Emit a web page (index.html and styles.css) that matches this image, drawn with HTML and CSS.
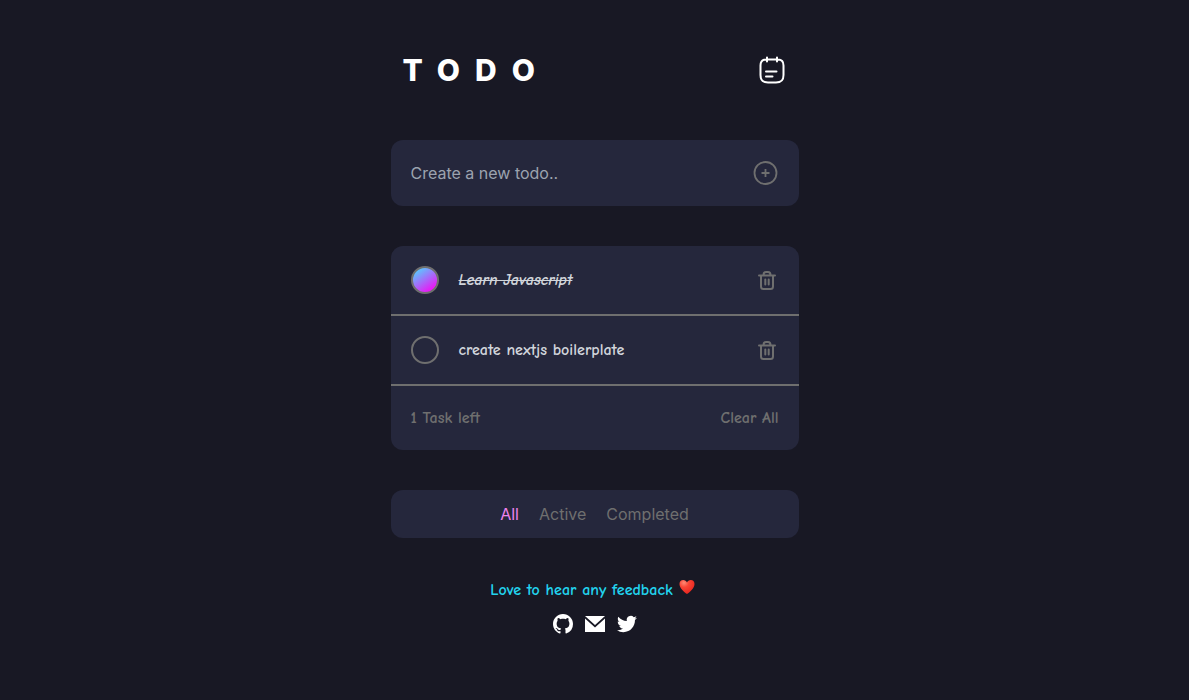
FILE: index.html
```html
<!DOCTYPE html>
<html lang="en">
<head>
<meta charset="utf-8">
<meta name="viewport" content="width=device-width, initial-scale=1">
<title>Todo</title>
<link rel="stylesheet" href="styles.css">
</head>
<body>
<svg class="sprite" aria-hidden="true">
  <symbol id="trash" viewBox="0 0 18 20">
    <g fill="none" stroke="currentColor" stroke-width="2" stroke-linecap="round" stroke-linejoin="round">
      <path d="M1 5.500h16M3 6v10.500q0 2.500 2.500 2.500h7q2.500 0 2.500-2.500V6M5.500 5q0-3 2.500-3h2q2.500 0 2.500 3M7.300 9.500v5M10.700 9.500v5"/>
    </g>
  </symbol>
</svg>
<main class="app">
  <header class="header">
    <h1 class="title">TODO</h1>
    <svg class="note" viewBox="0 0 28 28" fill="none" stroke="currentColor" stroke-width="2" stroke-linecap="round" aria-hidden="true">
      <path d="M9 3.500h8M8 1.500v4M18 1.500v4M7 3.500C3 3.500 1.500 5.500 1.500 9.500v9.500c0 5.500 2 7.500 7.500 7.500h8c5.500 0 7.500-2 7.500-7.500V9.500c0-4-1.500-6-5.500-6M7 15.500h10.500M7 20.500h6.500"/>
    </svg>
  </header>

  <form class="card create">
    <input class="create-input" type="text" aria-label="New todo" placeholder="Create a new todo..">
    <button class="icon-button" type="button" aria-label="Add todo">
      <svg class="add" viewBox="0 0 26 26" fill="none" stroke="currentColor" stroke-width="1.800" aria-hidden="true">
        <circle cx="12.500" cy="13" r="11"/><path d="M12.500 9v8M8.500 13h8"/>
      </svg>
    </button>
  </form>

  <section class="card">
    <ul class="list">
      <li class="item">
        <input class="check" id="todo-1" type="checkbox" checked>
        <label class="label" for="todo-1">Learn Javascript</label>
        <button class="icon-button" type="button" aria-label="Delete Learn Javascript"><svg class="trash" aria-hidden="true"><use href="#trash"/></svg></button>
      </li>
      <li class="item">
        <input class="check" id="todo-2" type="checkbox">
        <label class="label" for="todo-2">create nextjs boilerplate</label>
        <button class="icon-button" type="button" aria-label="Delete create nextjs boilerplate"><svg class="trash" aria-hidden="true"><use href="#trash"/></svg></button>
      </li>
    </ul>
    <div class="summary">
      <span>1 Task left</span>
      <button class="text-button" type="button">Clear All</button>
    </div>
  </section>

  <nav class="card filters" aria-label="Filter">
    <button class="text-button active" type="button">All</button>
    <button class="text-button" type="button">Active</button>
    <button class="text-button" type="button">Completed</button>
  </nav>

  <footer class="footer">
    <p class="feedback">Love to hear any feedback
      <svg class="heart" viewBox="0 0 20 16" role="img" aria-label="Heart">
        <defs><radialGradient id="red" cx=".3" cy=".2" r=".8"><stop offset="0" stop-color="#ff8a75"/><stop offset=".4" stop-color="#fa4636"/><stop offset="1" stop-color="#e8261f"/></radialGradient></defs>
        <path fill="url(#red)" d="M8 16C5 14 .5 10 .5 6 .5 3.500 2 2 4.200 2 6 2 7.400 3 8 4.500 8.600 3 10 2 11.800 2 14 2 15.500 3.500 15.500 6c0 4-4.500 8-7.500 10z"/>
      </svg>
    </p>
    <div class="social">
      <a href="#github" aria-label="GitHub"><svg class="social-icon" viewBox="0 0 16 16" fill="currentColor" aria-hidden="true"><path d="M8 0C3.580 0 0 3.580 0 8c0 3.540 2.290 6.530 5.470 7.590.4.070.55-.17.55-.38 0-.19-.01-.82-.01-1.490-2.010.37-2.530-.49-2.690-.94-.09-.23-.48-.94-.82-1.130-.28-.15-.68-.52-.01-.53.63-.01 1.080.58 1.230.82.72 1.210 1.870.87 2.330.66.07-.52.28-.87.51-1.070-1.780-.2-3.640-.89-3.640-3.950 0-.87.31-1.590.82-2.150-.08-.2-.36-1.020.08-2.120 0 0 .67-.21 2.200.82.64-.18 1.320-.27 2-.27s1.360.09 2 .27c1.530-1.040 2.200-.82 2.200-.82.44 1.100.16 1.920.08 2.120.51.56.82 1.270.82 2.150 0 3.070-1.870 3.750-3.650 3.950.29.25.54.73.54 1.480 0 1.070-.01 1.930-.01 2.200 0 .21.15.46.55.38A8.010 8.010 0 0 0 16 8c0-4.420-3.580-8-8-8z"/></svg></a>
      <a href="#email" aria-label="Email"><svg class="social-icon" viewBox="0 0 20 20" fill="currentColor" aria-hidden="true"><path d="M0 2h20L10 11zM0 4.600l10 9 10-9V18H0z"/></svg></a>
      <a href="#twitter" aria-label="Twitter"><svg class="social-icon" viewBox="0 0 24 24" fill="currentColor" aria-hidden="true"><path d="M23.950 4.570a10 10 0 0 1-2.820.77 4.960 4.960 0 0 0 2.160-2.720c-.95.55-2 .95-3.130 1.180a4.920 4.920 0 0 0-8.380 4.480C7.690 8.090 4.070 6.130 1.640 3.160a4.820 4.820 0 0 0-.67 2.480c0 1.710.87 3.210 2.190 4.100a4.900 4.900 0 0 1-2.230-.62v.06a4.920 4.920 0 0 0 3.950 4.830 5 5 0 0 1-2.210.08 4.940 4.940 0 0 0 4.600 3.420A9.870 9.870 0 0 1 0 19.540a14 14 0 0 0 7.550 2.210c9.050 0 14-7.500 14-13.980 0-.21 0-.42-.02-.63a9.940 9.940 0 0 0 2.420-2.570z"/></svg></a>
    </div>
  </footer>
</main>
</body>
</html>
```
FILE: styles.css
```css
* {
  box-sizing: border-box;
}

body {
  margin: 0;
  background: #181824;
  color: #fff;
  font: 16px/24px Inter, sans-serif;
}

button,
input {
  font: inherit;
}

svg {
  display: block;
}

.sprite {
  position: absolute;
  width: 0;
  height: 0;
}

.app {
  display: flex;
  flex-direction: column;
  gap: 40px;
  width: 100%;
  max-width: 408px;
  margin: 0 auto;
  padding: 40px 0;
}

.header {
  display: flex;
  align-items: center;
  justify-content: space-between;
  padding: 12px;
}

.title {
  margin: 0;
  font-size: 30px;
  line-height: 36px;
  font-weight: 800;
  letter-spacing: 15px;
}

.note {
  width: 28px;
  height: 28px;
}

.card {
  border-radius: 12px;
  background: #25273c;
}

.create {
  display: flex;
  align-items: center;
  padding: 20px;
}

.create-input {
  flex: 1;
  min-width: 0;
  padding: 0;
  border: 0;
  outline: 0;
  background: none;
  color: #d1d5db;
}

.create-input::placeholder {
  color: #9ca3af;
  opacity: 1;
}

.icon-button,
.text-button {
  padding: 0;
  border: 0;
  background: none;
  color: #6f6f6f;
  cursor: pointer;
}

.add {
  width: 26px;
  height: 26px;
}

.list {
  margin: 0;
  padding: 0;
  list-style: none;
}

.item {
  display: flex;
  align-items: center;
  gap: 20px;
  padding: 20px;
  border-bottom: 2px solid #6f6f6f;
}

.check {
  appearance: none;
  width: 28px;
  height: 28px;
  margin: 0;
  border: 2px solid #6f6f6f;
  border-radius: 50%;
}

.check:checked {
  background: linear-gradient(145deg, #57ccff 10%, #f40af4 90%);
}

.label,
.summary,
.feedback {
  font-family: "Comic Neue", Lato, sans-serif;
  font-weight: 700;
}

.label {
  flex: 1;
  color: #d1d5db;
}

.check:checked + .label {
  font-style: italic;
  text-decoration: line-through;
}

.trash {
  width: 18px;
  height: 20px;
  margin-right: 3px;
}

.summary {
  display: flex;
  justify-content: space-between;
  padding: 20px;
  color: #6f6f6f;
}

.filters {
  display: flex;
  justify-content: center;
  gap: 20px;
  padding: 12px;
}

.active {
  color: #ee82ee;
}

.footer {
  display: flex;
  flex-direction: column;
  align-items: center;
  gap: 12px;
}

.feedback {
  display: flex;
  gap: 6px;
  margin: 0;
  color: #22d3ee;
}

.heart {
  width: 20px;
  height: 16px;
}

.social {
  display: flex;
  gap: 12px;
}

.social a {
  color: inherit;
}

.social-icon {
  width: 20px;
  height: 20px;
}
```
